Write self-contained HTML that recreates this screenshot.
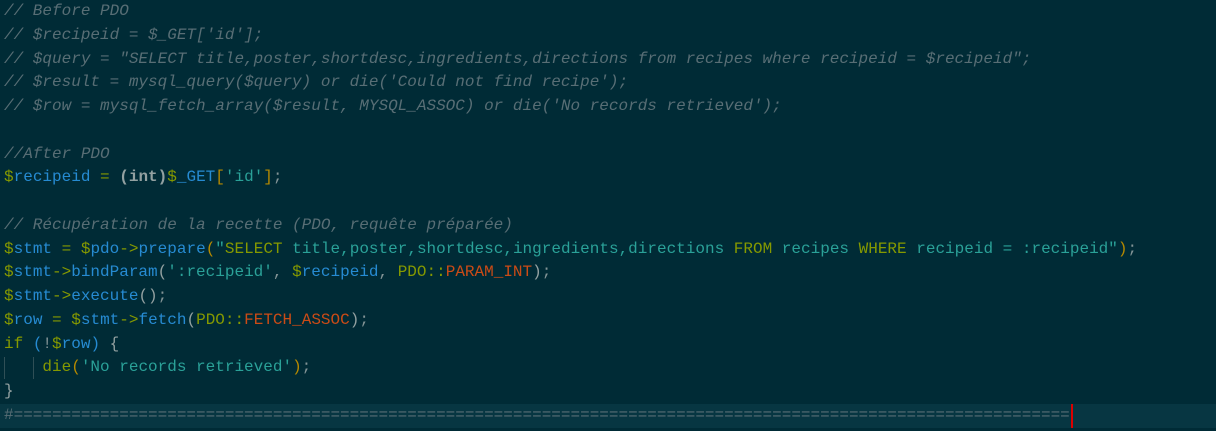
<!DOCTYPE html><html><head><style>
body{margin:0;background:#002b36;width:1216px;height:431px;overflow:hidden}
pre{margin:0;padding:0 0 0 4px;font:16px/23.75px "Liberation Mono",monospace;color:#839496}
.c{color:#586e75;font-style:italic}.v{color:#268bd2}.g{color:#859900}.s{color:#2aa198}.y{color:#b58900}.o{color:#cb4b16}.b{color:#93a1a1;font-weight:bold}.w{color:#93a1a1}
.cur{position:absolute;left:0;top:404px;width:1216px;height:24px;background:#073642}
.caret{position:absolute;left:1071px;top:404px;width:2px;height:24px;background:#dc0000}
.guide{position:absolute;top:357px;height:22px;width:1px;background:#2f4f56}
</style></head><body>
<div class="cur"></div><div class="caret"></div>
<div class="guide" style="left:4px"></div><div class="guide" style="left:33px"></div>
<pre style="position:relative"><span class="c">// Before PDO
// $recipeid = $_GET['id'];
// $query = "SELECT title,poster,shortdesc,ingredients,directions from recipes where recipeid = $recipeid";
// $result = mysql_query($query) or die('Could not find recipe');
// $row = mysql_fetch_array($result, MYSQL_ASSOC) or die('No records retrieved');</span>

<span class="c">//After PDO</span>
<span class="g">$</span><span class="v">recipeid</span> <span class="g">=</span> <span class="b">(int)</span><span class="g">$</span><span class="v">_GET</span><span class="y">[</span><span class="s">'id'</span><span class="y">]</span>;

<span class="c">// Récupération de la recette (PDO, requête préparée)</span>
<span class="g">$</span><span class="v">stmt</span> <span class="g">=</span> <span class="g">$</span><span class="v">pdo</span><span class="g">-&gt;</span><span class="v">prepare</span><span class="y">(</span><span class="s">"</span><span class="g">SELECT</span><span class="s"> title,poster,shortdesc,ingredients,directions </span><span class="g">FROM</span><span class="s"> recipes </span><span class="g">WHERE</span><span class="s"> recipeid = :recipeid"</span><span class="y">)</span>;
<span class="g">$</span><span class="v">stmt</span><span class="g">-&gt;</span><span class="v">bindParam</span><span class="w">(</span><span class="s">':recipeid'</span>, <span class="g">$</span><span class="v">recipeid</span>, <span class="g">PDO::</span><span class="o">PARAM_INT</span><span class="w">)</span>;
<span class="g">$</span><span class="v">stmt</span><span class="g">-&gt;</span><span class="v">execute</span><span class="w">()</span>;
<span class="g">$</span><span class="v">row</span> <span class="g">=</span> <span class="g">$</span><span class="v">stmt</span><span class="g">-&gt;</span><span class="v">fetch</span><span class="w">(</span><span class="g">PDO::</span><span class="o">FETCH_ASSOC</span><span class="w">)</span>;
<span class="g">if</span> <span class="v">(</span>!<span class="g">$</span><span class="v">row</span><span class="v">)</span> <span class="w">{</span>
    <span class="g">die</span><span class="y">(</span><span class="s">'No records retrieved'</span><span class="y">)</span>;
<span class="w">}</span>
<span class="c" style="font-style:normal">#==============================================================================================================</span></pre>
</body></html>
